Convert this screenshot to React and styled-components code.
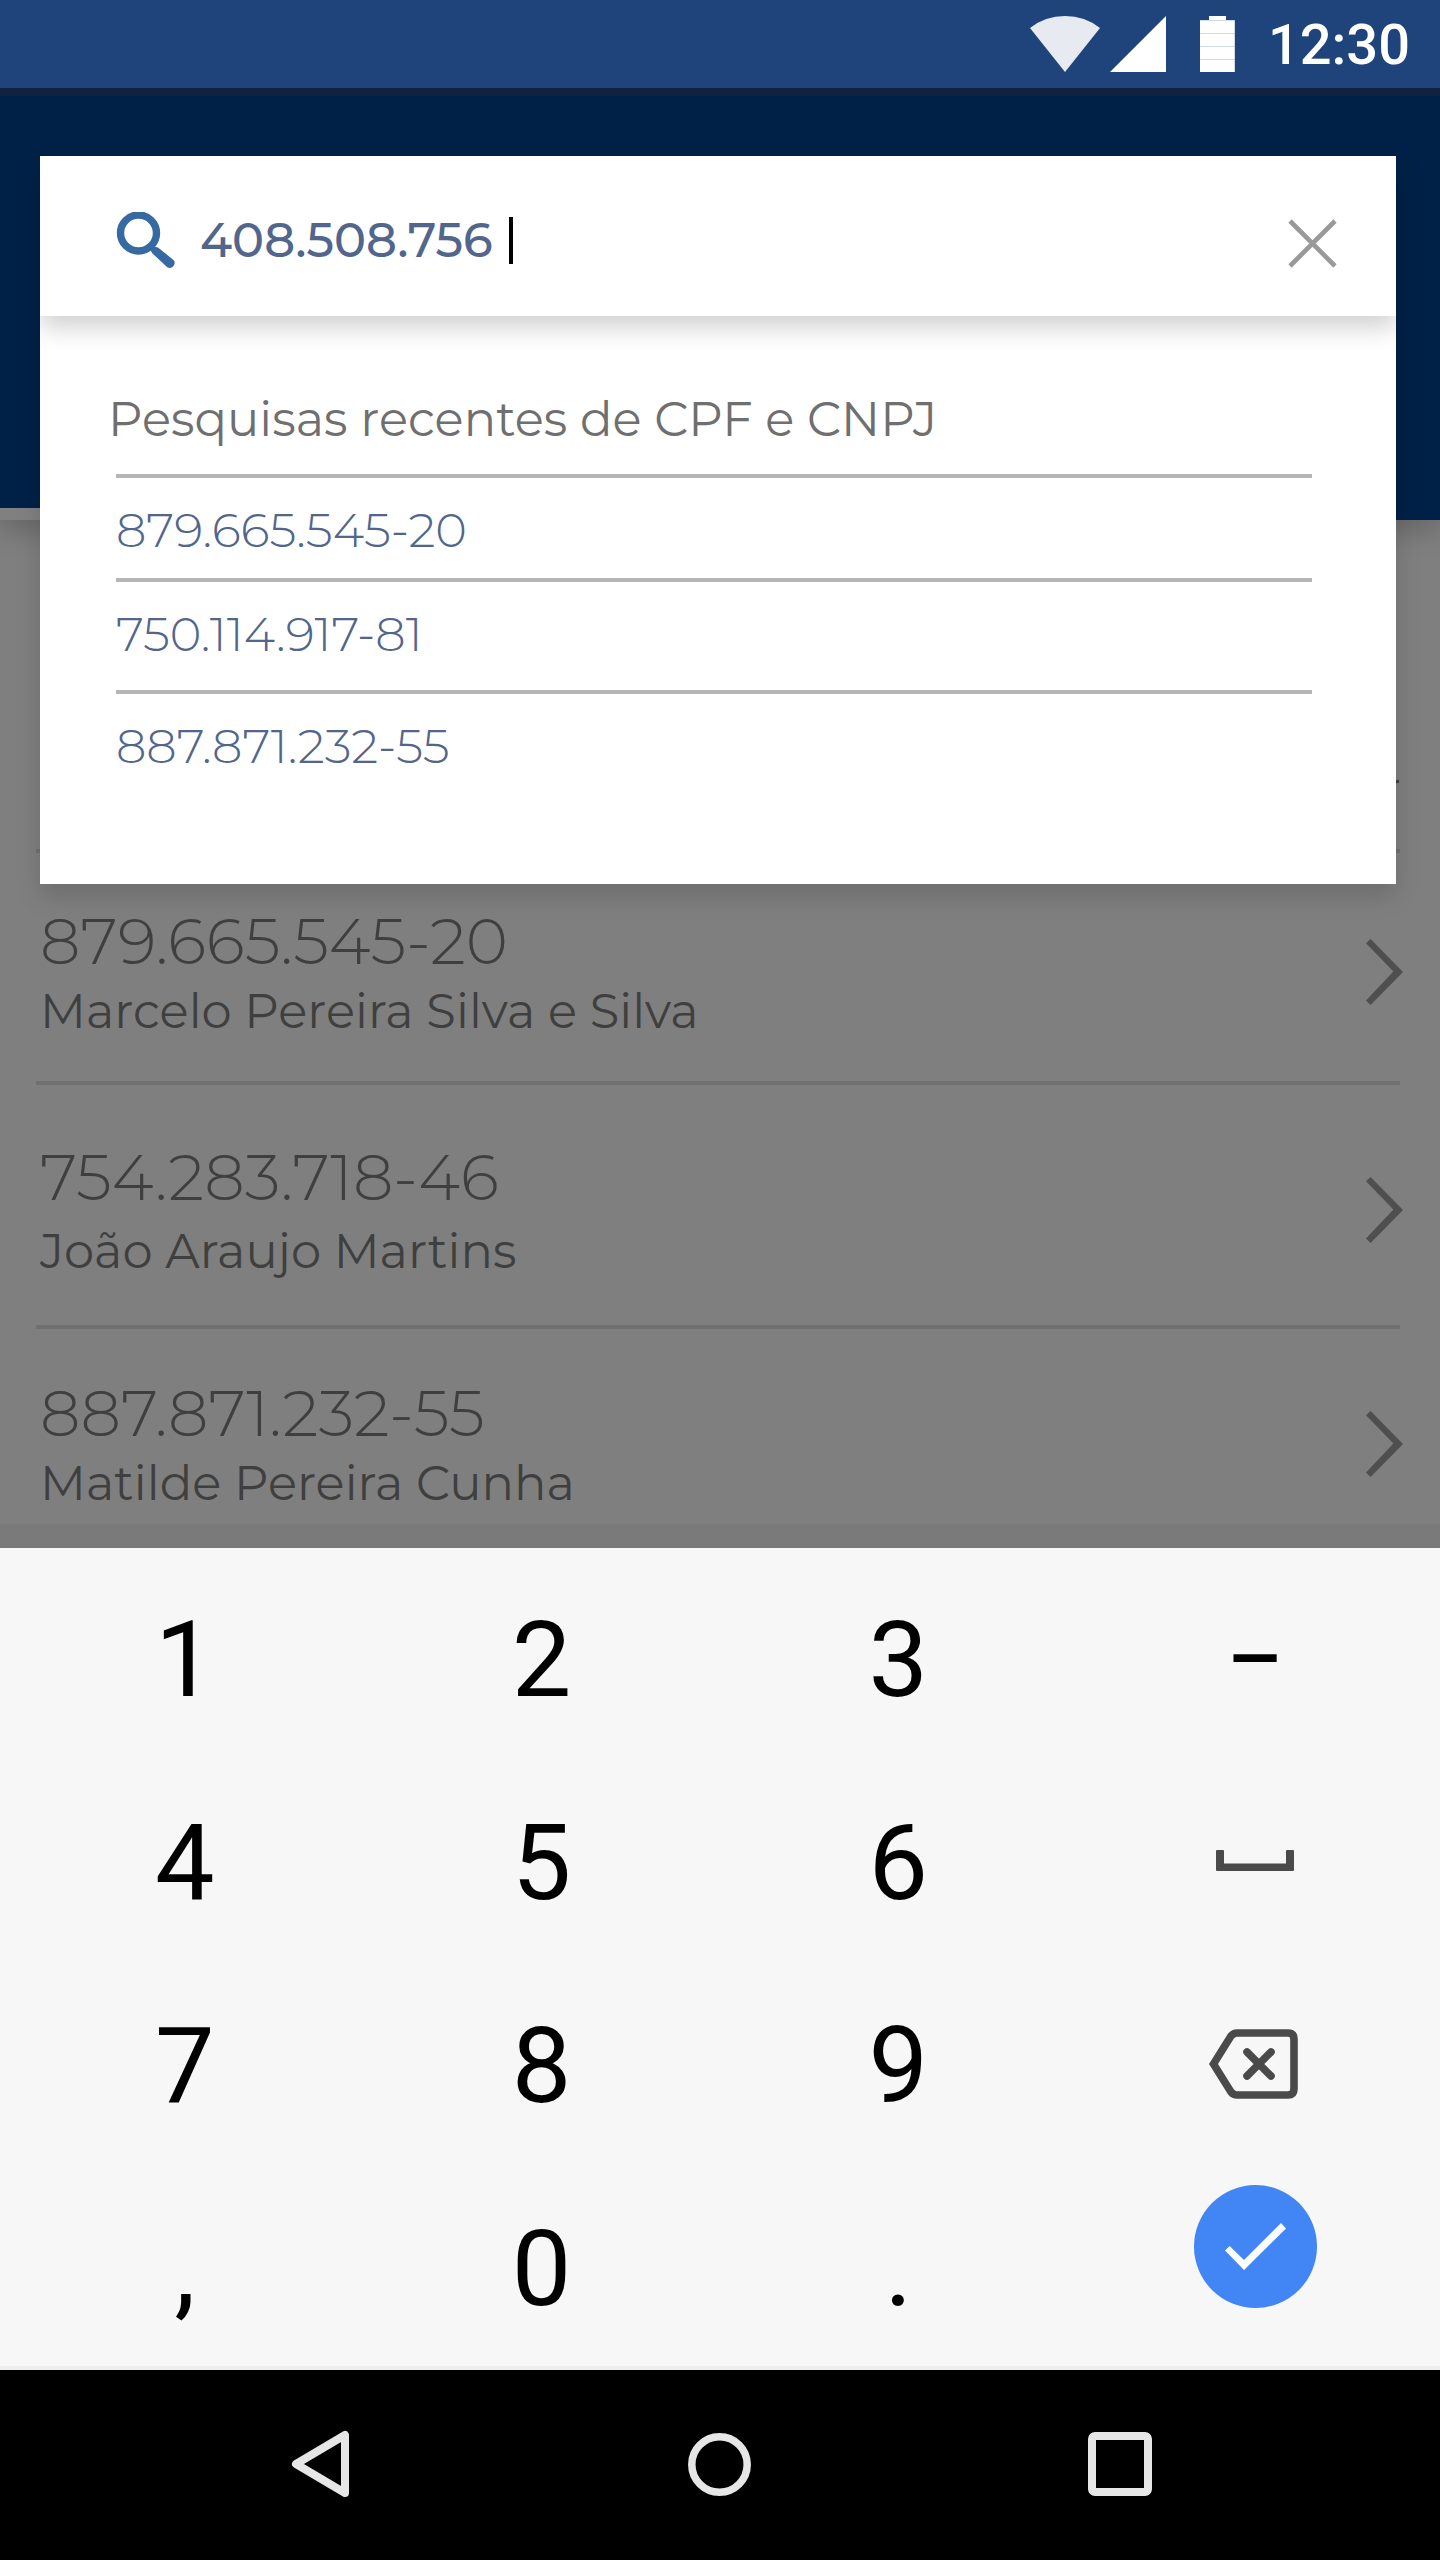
import React, { useState } from 'react';
import styled, { createGlobalStyle } from 'styled-components';

const recentSearches = [
	{ id: '879.665.545-20', height: 104 },
	{ id: '750.114.917-81', height: 112 },
	{ id: '887.871.232-55', height: 190 },
];

const clients = [
	{
		document: '879.665.545-20',
		name: 'Marcelo Pereira Silva e Silva',
		height: 232,
		top: 52,
		gap: 6,
	},
	{
		document: '754.283.718-46',
		name: 'João Araujo Martins',
		height: 244,
		top: 56,
		gap: 10,
	},
	{
		document: '887.871.232-55',
		name: 'Matilde Pereira Cunha',
		height: 240,
		top: 48,
		gap: 6,
	},
];

const GlobalStyle = createGlobalStyle`
	*, *::before, *::after {
		box-sizing: border-box;
	}

	body {
		margin: 0;
		background: #000;
		font-family: 'Montserrat', 'Inter', sans-serif;
	}

	button {
		border: none;
		padding: 0;
		background: none;
		font: inherit;
		color: inherit;
	}

	svg {
		display: block;
	}
`;

const Screen = styled.div`
	width: 1440px;
	height: 2560px;
	display: flex;
	flex-direction: column;
	overflow: hidden;
`;

const StatusBar = styled.header`
	height: 88px;
	flex-shrink: 0;
	display: flex;
	align-items: flex-start;
	justify-content: flex-end;
	padding: 16px 30px 0 0;
	background: #1e447b;
`;

const StatusIcons = styled.div`
	display: flex;
	margin-right: 29px;
`;

const Clock = styled.span`
	padding-top: 1px;
	font-family: 'Roboto', sans-serif;
	font-size: 56px;
	font-weight: 500;
	line-height: 56px;
	color: white;
`;

const Main = styled.main`
	position: relative;
	height: 1460px;
	flex-shrink: 0;
	overflow: hidden;
	background: #7f7f7f;
`;

const PageHeader = styled.div`
	position: relative;
	height: 432px;
	display: flex;
	align-items: flex-end;
	background: #002147;
	border-top: 8px solid #10223f;
	box-shadow: 0 12px 24px rgba(0, 0, 0, 0.18);
`;

const TabIndicator = styled.div`
	width: 50%;
	height: 12px;
	background: #808080;
`;

const ListHeader = styled.div`
	height: 333px;
	margin: 0 40px 0 36px;
	display: flex;
	align-items: flex-end;
	justify-content: flex-end;
	padding-bottom: 46px;
	border-bottom: 4px solid #707070;
`;

const ClientList = styled.ul`
	list-style: none;
	margin: 0;
	padding: 0 37px 0 36px;
`;

const ClientItem = styled.li`
	position: relative;
	height: ${(p) => p.$height}px;
	padding-top: ${(p) => p.$top}px;
	color: #3f3f3f;

	&:not(:last-child)::after {
		content: '';
		position: absolute;
		left: 0;
		right: 3px;
		bottom: 0;
		height: 4px;
		background: #707070;
	}
`;

const ClientRow = styled.div`
	display: flex;
	align-items: center;
	justify-content: space-between;
	padding-left: 4px;
`;

const ClientInfo = styled.div`
	display: flex;
	flex-direction: column;
	gap: ${(p) => p.$gap}px;
`;

const ClientDocument = styled.span`
	font-size: 64px;
	font-weight: 300;
	line-height: 72px;
`;

const ClientName = styled.span`
	font-size: 48px;
	line-height: 56px;
	letter-spacing: 0.05px;
`;

const Dialog = styled.section`
	position: absolute;
	top: 68px;
	left: 40px;
	width: 1356px;
	height: 728px;
	background: white;
	box-shadow: 0 12px 24px rgba(0, 0, 0, 0.14);
`;

const SearchBar = styled.div`
	position: relative;
	height: 160px;
	display: flex;
	align-items: center;
	padding: 8px 59px 0 75px;
	background: white;
`;

const SearchText = styled.span`
	margin-left: 23px;
	padding-bottom: 1px;
	font-size: 48px;
	font-weight: 500;
	line-height: 56px;
	color: #52658c;
`;

const Caret = styled.i`
	width: 4px;
	height: 47px;
	margin-left: 16px;
	background: black;
`;

const CloseButton = styled.button`
	margin: 7px 0 0 auto;
`;

const Recent = styled.div`
	height: 568px;
	overflow: hidden;
	padding: 71px 84px 0 76px;

	/* the search bar casts its shadow only inside the dialog */
	&::before {
		content: '';
		position: absolute;
		left: 0;
		right: 0;
		top: 120px;
		height: 40px;
		box-shadow: 0 12px 24px rgba(0, 0, 0, 0.18);
		clip-path: inset(0 0 -60px 0);
	}
`;

const RecentTitle = styled.h2`
	margin: 0 0 23px -8px;
	font-size: 48px;
	font-weight: 400;
	line-height: 64px;
	letter-spacing: 0.05px;
	color: #6f6f6f;
	white-space: nowrap;
`;

const RecentItem = styled.div`
	height: ${(p) => p.$height}px;
	padding-top: 24px;
	border-top: 4px solid #b5b5b5;
	font-size: 48px;
	font-weight: 300;
	line-height: 57px;
	color: #52658c;
`;

const Keyboard = styled.div`
	position: relative;
	height: 822px;
	flex-shrink: 0;
	display: grid;
	grid-template-columns: repeat(4, 1fr);
	grid-template-rows: repeat(4, 203.2px);
	padding: 10px 6.5px 0 6.5px;
	background: #f7f7f7;
	border-bottom: 4px solid #eeeeee;
	box-shadow: 0 -24px 0 #7a7a7a;
`;

const Key = styled.button`
	display: flex;
	align-items: center;
	justify-content: center;
	padding-bottom: ${(p) => p.$lift || 0}px;
	font-family: 'Roboto', sans-serif;
	font-size: 106px;
	line-height: 124px;
	color: black;
`;

const ConfirmCircle = styled.span`
	width: 123px;
	height: 123px;
	display: flex;
	align-items: center;
	justify-content: center;
	border-radius: 50%;
	background: #4285f4;
`;

const NavBar = styled.nav`
	height: 190px;
	flex-shrink: 0;
	display: flex;
	align-items: center;
	justify-content: space-between;
	padding: 0 288px 2px 291px;
	background: black;
`;

function SearchIcon() {
	return (
		<svg width="62" height="56" viewBox="0 0 62 56">
			<circle cx="23.5" cy="21" r="18" fill="none" stroke="#3769a3" strokeWidth="7.4" />
			<path
				d="M35 37 L38.5 34.5 L43 35.5 L58.5 48 C62 51.5 57 58.5 52 55 L37 41 Z"
				fill="#3769a3"
			/>
		</svg>
	);
}

function CloseIcon() {
	return (
		<svg width="49" height="49" viewBox="0 0 49 49">
			<path d="M2 2 L47 47 M47 2 L2 47" stroke="#999999" strokeWidth="4.6" />
		</svg>
	);
}

function ChevronIcon() {
	return (
		<svg width="37" height="66" viewBox="0 0 37 66">
			<path
				d="M0 4.2 L4.6 0 L37 33 L4.6 66 L0 61.6 L27.4 32.4 Z"
				fill="#4f4f4f"
			/>
		</svg>
	);
}

function BackspaceIcon() {
	return (
		<svg width="92" height="70" viewBox="0 0 92 70">
			<g fill="none" stroke="#4a4a4a" strokeWidth="7.6">
				<path d="M28 4 H79 Q85 4 85 10 V60 Q85 66 79 66 H28 Q24.5 66 22 63 L4.5 35 L22 7 Q24.5 4 28 4 Z" />
				<path d="M38 23 L62 47 M62 23 L38 47" strokeLinecap="round" />
			</g>
		</svg>
	);
}

const symbolKeys = {
	space: (
		<svg width="78" height="21" viewBox="0 0 78 21">
			<path
				d="M1 0 H7 Q8 0 8 1 V13.5 H70 V1 Q70 0 71 0 H77 Q78 0 78 1 V20 Q78 21 77 21 H1 Q0 21 0 20 V1 Q0 0 1 0 Z"
				fill="#4a4a4a"
			/>
		</svg>
	),
	backspace: <BackspaceIcon />,
	confirm: (
		<ConfirmCircle>
			<svg width="61" height="47" viewBox="0 0 61 47">
				<path
					d="M0 27.5 L4.7 23 L19 37 L56 0 L61 5.4 L19 47 Z"
					fill="white"
				/>
			</svg>
		</ConfirmCircle>
	),
};

const keys = [
	'1', '2', '3', '−',
	'4', '5', '6', 'space',
	'7', '8', '9', 'backspace',
	',', '0', '.', 'confirm',
];

const lifts = { space: 5, backspace: 3, confirm: 45 };

export default function App() {
	const [query, setQuery] = useState('408.508.756');

	function press(key) {
		if (key === 'backspace') {
			setQuery((q) => q.slice(0, -1));
		} else if (!symbolKeys[key]) {
			setQuery((q) => q + key);
		}
	}

	return (
		<Screen>
			<GlobalStyle />
			<StatusBar>
				<StatusIcons>
					<svg width="209" height="56" viewBox="0 0 209 56">
						<path d="M0 12 Q15 0 35 0 Q55 0 70 12 L35 56 Z" fill="#e7ebf1" />
						<path d="M136 0 V56 H80 Z" fill="white" />
						<path d="M179 0 H196 V4 H205 V56 H170 V4 H179 Z" fill="white" />
						<path
							d="M170 4.5 H205 M170 17.5 H205 M170 30.5 H205 M170 43.5 H205 M204.5 4 V56"
							stroke="#1e447b"
							strokeOpacity="0.2"
						/>
					</svg>
				</StatusIcons>
				<Clock>12:30</Clock>
			</StatusBar>
			<Main>
				<PageHeader>
					<TabIndicator />
				</PageHeader>
				<ListHeader>
					<svg width="40" height="24" viewBox="0 0 40 24">
						<path d="M0 1 L20 22 L33 3.5 L39 2" fill="none" stroke="#404040" strokeWidth="3" />
					</svg>
				</ListHeader>
				<ClientList>
					{clients.map((client) => (
						<ClientItem
							key={client.document}
							$height={client.height}
							$top={client.top}
						>
							<ClientRow>
								<ClientInfo $gap={client.gap}>
									<ClientDocument>{client.document}</ClientDocument>
									<ClientName>{client.name}</ClientName>
								</ClientInfo>
								<ChevronIcon />
							</ClientRow>
						</ClientItem>
					))}
				</ClientList>
				<Dialog>
					<SearchBar>
						<SearchIcon />
						<SearchText>{query}</SearchText>
						<Caret />
						<CloseButton onClick={() => setQuery('')}>
							<CloseIcon />
						</CloseButton>
					</SearchBar>
					<Recent>
						<RecentTitle>Pesquisas recentes de CPF e CNPJ</RecentTitle>
						{recentSearches.map((item) => (
							<RecentItem key={item.id} $height={item.height}>
								{item.id}
							</RecentItem>
						))}
					</Recent>
				</Dialog>
			</Main>
			<Keyboard>
				{keys.map((key) => (
					<Key key={key} $lift={lifts[key]} onClick={() => press(key)}>
						{symbolKeys[key] || key}
					</Key>
				))}
			</Keyboard>
			<NavBar>
				<svg width="59" height="68" viewBox="0 0 59 68">
					<path
						d="M54 5 V63 L5 34 Z"
						fill="none"
						stroke="#e6e6e6"
						strokeWidth="8"
						strokeLinejoin="round"
					/>
				</svg>
				<svg width="63" height="63" viewBox="0 0 63 63">
					<circle cx="31.5" cy="31.5" r="27.7" fill="none" stroke="#e6e6e6" strokeWidth="7.5" />
				</svg>
				<svg width="64" height="64" viewBox="0 0 64 64">
					<rect x="4" y="4" width="56" height="56" rx="3" fill="none" stroke="#e6e6e6" strokeWidth="8" />
				</svg>
			</NavBar>
		</Screen>
	);
}
